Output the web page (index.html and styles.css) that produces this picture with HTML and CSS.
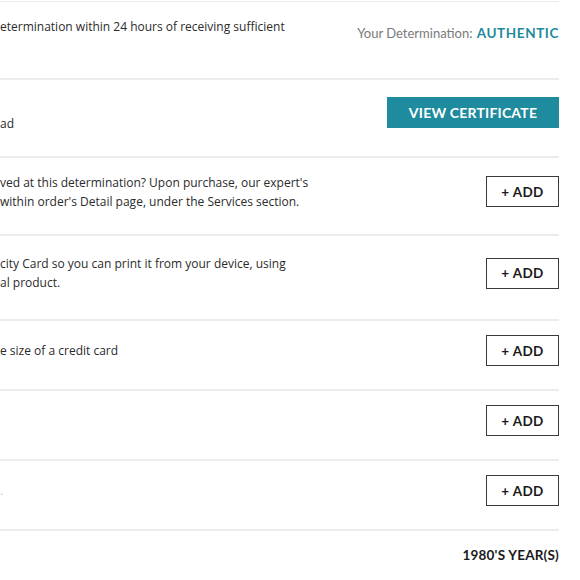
FILE: index.html
```html
<!DOCTYPE html>
<html lang="en">
<head>
<meta charset="utf-8">
<title>Services</title>
<link rel="stylesheet" href="styles.css">
</head>
<body>
<div class="panel">
  <div class="row row-1">
    <div class="desc">
      <span class="line">etermination within 24 hours of receiving sufficient</span>
      <span class="line">&nbsp;</span>
    </div>
    <div class="result">Your Determination: <strong>AUTHENTIC</strong></div>
  </div>
  <div class="row row-2">
    <div class="desc">
      <span class="line">&nbsp;</span>
      <span class="line">ad</span>
    </div>
    <button class="btn-primary" type="button">VIEW CERTIFICATE</button>
  </div>
  <div class="row row-3">
    <div class="desc">
      <span class="line">ved at this determination? Upon purchase, our expert's</span>
      <span class="line">within order's Detail page, under the Services section.</span>
    </div>
    <button class="btn-add" type="button">+ ADD</button>
  </div>
  <div class="row row-4">
    <div class="desc">
      <span class="line">city Card so you can print it from your device, using</span>
      <span class="line">al product.</span>
    </div>
    <button class="btn-add" type="button">+ ADD</button>
  </div>
  <div class="row row-5">
    <div class="desc">
      <span class="line">e size of a credit card</span>
    </div>
    <button class="btn-add" type="button">+ ADD</button>
  </div>
  <div class="row row-6">
    <div class="desc"></div>
    <button class="btn-add" type="button">+ ADD</button>
  </div>
  <div class="row row-7">
    <div class="desc">
      <span class="line dot">.</span>
    </div>
    <button class="btn-add" type="button">+ ADD</button>
  </div>
  <div class="row row-8">
    <div class="desc"></div>
    <div class="era">1980'S YEAR(S)</div>
  </div>
</div>
</body>
</html>
```

FILE: styles.css
```css
html, body {
  margin: 0;
  padding: 0;
  background: #ffffff;
  overflow: hidden;
}

body {
  font-family: "Open Sans", "Liberation Sans", sans-serif;
  color: #2b2b2b;
}

.panel {
  width: 559px;
  margin-top: 1px;
  border-top: 1px solid #ececec;
}

.row {
  box-sizing: border-box;
  display: flex;
  align-items: center;
  justify-content: space-between;
  padding-bottom: 9px;
  border-bottom: 2px solid #ececec;
}

.row-1 { height: 78px; }
.row-2 { height: 78px; }
.row-3 { height: 78px; }
.row-4 { height: 85px; }
.row-5 { height: 70px; }
.row-6 { height: 70px; }
.row-7 { height: 70px; }
.row-8 { height: 50px; border-bottom: none; padding-bottom: 0; }

.desc {
  font-size: 12px;
  line-height: 19px;
  color: #2b2b2b;
}

.line {
  display: block;
  white-space: nowrap;
}

.dot {
  color: #c8c8c8;
}

.result {
  font-family: "Lato", "Liberation Sans", sans-serif;
  font-size: 13px;
  color: #7a7a7a;
  margin-top: -5px;
}

.result strong {
  color: #1e8a9d;
  font-weight: 700;
  letter-spacing: 0.6px;
  font-size: 13.5px;
  margin-left: 1px;
}

.btn-primary {
  font-family: "Lato", "Liberation Sans", sans-serif;
  font-weight: 700;
  font-size: 14px;
  letter-spacing: 0.2px;
  color: #ffffff;
  background: #1f8b9e;
  border: none;
  width: 172px;
  height: 31px;
  padding: 0;
  margin-top: -3px;
  cursor: pointer;
}

.btn-add {
  box-sizing: border-box;
  font-family: "Lato", "Liberation Sans", sans-serif;
  font-weight: 700;
  font-size: 13.5px;
  letter-spacing: 0.4px;
  color: #1a1a1a;
  background: #ffffff;
  border: 1.5px solid #3a3a3a;
  width: 73px;
  height: 31px;
  padding: 0;
  cursor: pointer;
}

.era {
  font-family: "Lato", "Liberation Sans", sans-serif;
  font-weight: 700;
  font-size: 13.5px;
  letter-spacing: 0.2px;
  color: #1a1a1a;
  margin-top: -2px;
}
```
